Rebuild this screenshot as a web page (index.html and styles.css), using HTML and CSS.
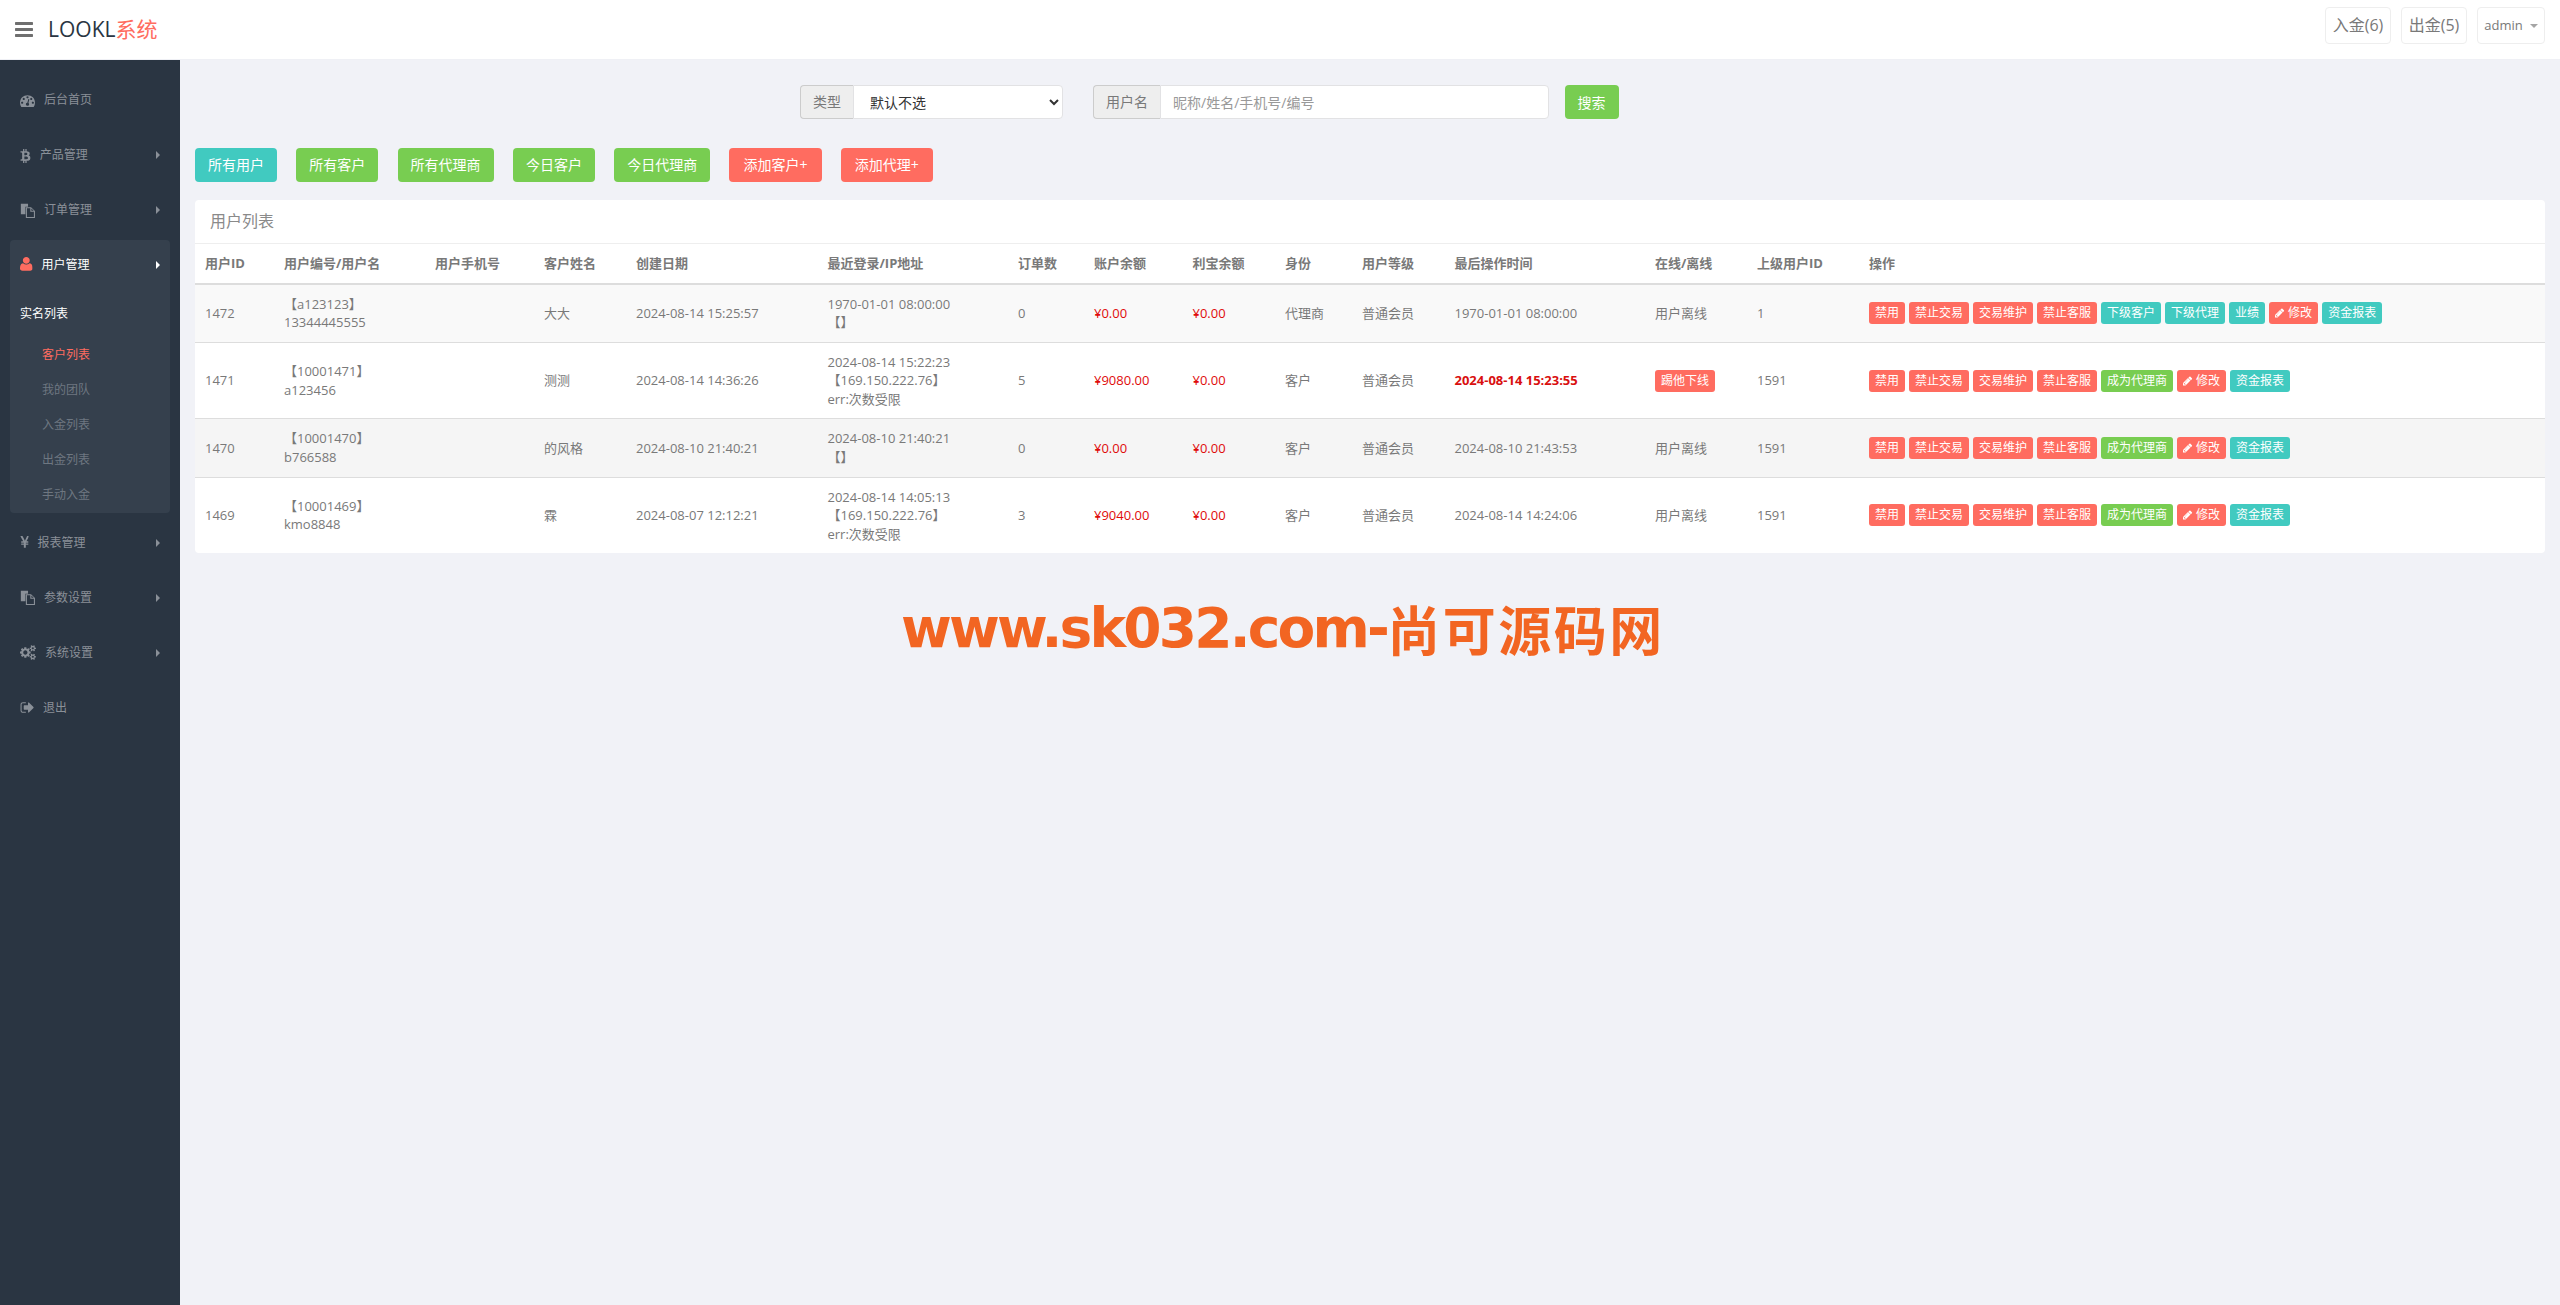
FILE: index.html
```html
<!DOCTYPE html>
<html lang="zh-CN">
<head>
<meta charset="utf-8">
<title>LOOKL系统</title>
<link rel="stylesheet" href="styles.css">
</head>
<body>
<svg class="sprite" xmlns="http://www.w3.org/2000/svg">
  <symbol id="i-bars" viewBox="128 256 1536 1280"><path d="M1664 1344v128q0 26-19 45t-45 19h-1408q-26 0-45-19t-19-45v-128q0-26 19-45t45-19h1408q26 0 45 19t19 45zm0-512v128q0 26-19 45t-45 19h-1408q-26 0-45-19t-19-45v-128q0-26 19-45t45-19h1408q26 0 45 19t19 45zm0-512v128q0 26-19 45t-45 19h-1408q-26 0-45-19t-19-45v-128q0-26 19-45t45-19h1408q26 0 45 19t19 45z"/></symbol>
  <symbol id="i-dash" viewBox="0 0 1792 1792"><path d="M384 1152q0-53-37.5-90.5t-90.5-37.5-90.5 37.5-37.5 90.5 37.5 90.5 90.5 37.5 90.5-37.5 37.5-90.5zm192-448q0-53-37.5-90.5t-90.5-37.5-90.5 37.5-37.5 90.5 37.5 90.5 90.5 37.5 90.5-37.5 37.5-90.5zm428 481l101-382q6-26-7.5-48.5t-38.5-29.5-48 6.5-30 39.5l-101 382q-60 5-107 43.5t-63 98.5q-20 77 20 146t117 89 146-20 89-117q16-60-6-117t-72-91zm660-33q0-53-37.5-90.5t-90.5-37.5-90.5 37.5-37.5 90.5 37.5 90.5 90.5 37.5 90.5-37.5 37.5-90.5zm-640-640q0-53-37.5-90.5t-90.5-37.5-90.5 37.5-37.5 90.5 37.5 90.5 90.5 37.5 90.5-37.5 37.5-90.5zm448 192q0-53-37.5-90.5t-90.5-37.5-90.5 37.5-37.5 90.5 37.5 90.5 90.5 37.5 90.5-37.5 37.5-90.5zm320 448q0 261-141 483-19 29-54 29h-1402q-35 0-54-29-141-221-141-483 0-182 71-348t191-286 286-191 348-71 348 71 286 191 191 286 71 348z"/></symbol>
  <symbol id="i-btc" viewBox="0 0 1280 1792"><path d="M1167 640q18 182-131 258 117 28 175 103t45 214q-7 71-32.5 125t-64.5 89-97 58.5-121.5 34.5-145.5 15v255h-154v-251q-80 0-122-1v252h-154v-255q-18 0-54-.5t-55-.5h-200l31-183h111q50 0 58-51v-402h16q-6-1-16-1v-287q-13-68-89-68h-111v-164l212 1q64 0 97-1v-252h154v247q82-2 122-2v-245h154v252q79 7 140 22.5t113 45 82.5 78 36.5 114.5zm-215 545q0-36-15-64t-37-46-57.5-30.5-65.5-18.5-74-9-69-3-64.5 1-47.5 1v338q8 0 37 .5t48 .5 53-1.5 58.5-4 57-8.5 55.5-14 47.5-21 39.5-30 24.5-40 9.5-51zm-71-476q0-33-12.5-58.5t-30.5-42-48-28-55-16.5-61.5-8-58-2.5-54 1-39.5.5v307q5 0 34.5.5t46.5 0 50-2 55-5.5 51.5-11 48.5-18.5 37-27 27-38.5 9-51z"/></symbol>
  <symbol id="i-files" viewBox="0 0 1792 1792"><path fill-rule="evenodd" d="M100 100h860v340H640v900H100zM700 500h620l470 470v820H700zM830 630v1030h830V1060h-430V630zM1360 650v280h280z"/></symbol>
  <symbol id="i-user" viewBox="0 0 1408 1792"><path d="M1408 1277q0 120-73 189.5t-194 69.5h-874q-121 0-194-69.5t-73-189.5q0-53 3.5-103.5t14-109 26.5-108.5 43-97.5 62-81 85.5-53.5 111.5-20q9 0 42 21.5t74.5 48 108 48 133.5 21.5 133.5-21.5 108-48 74.5-48 42-21.5q61 0 111.5 20t85.5 53.5 62 81 43 97.5 26.5 108.5 14 109 3.5 103.5zm-320-893q0 159-112.5 271.5t-271.5 112.5-271.5-112.5-112.5-271.5 112.5-271.5 271.5-112.5 271.5 112.5 112.5 271.5z"/></symbol>
  <symbol id="i-yen" viewBox="0 0 1025 1792"><path d="M662 1536h-172q-13 0-22.5-9t-9.5-23v-330h-288q-13 0-22.5-9t-9.5-23v-103q0-13 9.5-22.5t22.5-9.5h288v-85h-288q-13 0-22.5-9t-9.5-23v-104q0-13 9.5-22.5t22.5-9.5h214l-321-578q-8-16 0-32 10-16 28-16h194q19 0 29 18l215 425q19 38 56 125 10-24 30.5-68t27.5-61l191-420q8-19 29-19h191q17 0 27 16 9 14 1 31l-313 579h215q13 0 22.5 9.5t9.5 22.5v104q0 14-9.5 23t-22.5 9h-290v85h290q13 0 22.5 9.5t9.5 22.5v103q0 14-9.5 23t-22.5 9h-290v330q0 13-9.5 22.5t-22.5 9.5z"/></symbol>
  <symbol id="i-cogs" viewBox="0 0 1920 1792"><path d="M896 896q0-106-75-181t-181-75-181 75-75 181 75 181 181 75 181-75 75-181zm768 512q0-52-38-90t-90-38-90 38-38 90q0 53 37.5 90.5t90.5 37.5 90.5-37.5 37.5-90.5zm0-1024q0-52-38-90t-90-38-90 38-38 90q0 53 37.5 90.5t90.5 37.5 90.5-37.5 37.5-90.5zm-384 421v185q0 10-7 19.5t-16 10.5l-155 24q-11 35-32 76 34 48 90 115 7 11 7 20 0 12-7 19-23 30-82.5 89.5t-78.5 59.5q-11 0-21-7l-115-90q-37 19-77 31-11 108-23 155-7 24-30 24h-186q-11 0-20-7.5t-10-17.5l-23-153q-34-10-75-31l-118 89q-7 7-20 7-11 0-21-8-144-133-144-160 0-9 7-19 10-14 41-53t47-61q-23-44-35-82l-152-24q-10-1-17-9.5t-7-19.5v-185q0-10 7-19.5t16-10.5l155-24q11-35 32-76-34-48-90-115-7-11-7-20 0-12 7-20 22-30 82-89t79-59q11 0 21 7l115 90q34-18 77-32 11-108 23-154 7-24 30-24h186q11 0 20 7.5t10 17.5l23 153q34 10 75 31l118-89q8-7 20-7 11 0 21 8 144 133 144 160 0 8-7 19-12 16-42 54t-45 60q23 48 34 82l152 23q10 2 17 10.5t7 19.5zm640 533v140q0 16-149 31-12 27-30 52 51 113 51 138 0 4-4 7-122 71-124 71-8 0-46-47t-52-68q-20 2-30 2t-30-2q-14 21-52 68t-46 47q-2 0-124-71-4-3-4-7 0-25 51-138-18-25-30-52-149-15-149-31v-140q0-16 149-31 13-29 30-52-51-113-51-138 0-4 4-7 4-2 35-20t59-34 30-16q8 0 46 46.5t52 67.5q20-2 30-2t30 2q51-71 92-112l6-2q4 0 124 70 4 3 4 7 0 25-51 138 17 23 30 52 149 15 149 31zm0-1024v140q0 16-149 31-12 27-30 52 51 113 51 138 0 4-4 7-122 71-124 71-8 0-46-47t-52-68q-20 2-30 2t-30-2q-14 21-52 68t-46 47q-2 0-124-71-4-3-4-7 0-25 51-138-18-25-30-52-149-15-149-31v-140q0-16 149-31 13-29 30-52-51-113-51-138 0-4 4-7 4-2 35-20t59-34 30-16q8 0 46 46.5t52 67.5q20-2 30-2t30 2q51-71 92-112l6-2q4 0 124 70 4 3 4 7 0 25-51 138 17 23 30 52 149 15 149 31z"/></symbol>
  <symbol id="i-out" viewBox="0 0 1664 1792"><path d="M704 1440q0 4 1 20t.5 26.5-3 23.5-10 19.5-20.5 6.5h-320q-119 0-203.5-84.5t-84.5-203.5v-704q0-119 84.5-203.5t203.5-84.5h320q13 0 22.5 9.5t9.5 22.5q0 4 1 20t.5 26.5-3 23.5-10 19.5-20.5 6.5h-320q-66 0-113 47t-47 113v704q0 66 47 113t113 47h312l11.5 1 11.5 3 8 5.5 7 9 2 13.5zm928-544q0 26-19 45l-544 544q-19 19-45 19t-45-19-19-45v-288h-448q-26 0-45-19t-19-45v-384q0-26 19-45t45-19h448v-288q0-26 19-45t45-19 45 19l544 544q19 19 19 45z"/></symbol>
  <symbol id="i-pen" viewBox="128 128 1664 1536"><path d="M491 1536l91-91-235-235-91 91v107h128v128h107zm523-928q0-22-22-22-10 0-17 7l-542 542q-7 7-7 17 0 22 22 22 10 0 17-7l542-542q7-7 7-17zm-54-192l416 416-832 832h-416v-416zm683 96q0 53-37 90l-166 166-416-416 166-165q36-38 90-38 53 0 91 38l235 234q37 39 37 91z"/></symbol>
</svg>

<header class="topbar">
  <svg class="bars"><use href="#i-bars"/></svg>
  <div class="brand">LOOKL<span class="brand-accent">系统</span></div>
  <div class="top-actions">
    <a class="top-btn">入金(6)</a>
    <a class="top-btn">出金(5)</a>
    <a class="top-btn top-user">admin<span class="caret"></span></a>
  </div>
</header>

<div class="layout">
  <aside class="sidebar">
    <ul class="menu">
      <li class="item"><svg class="ico w15"><use href="#i-dash"/></svg>后台首页</li>
      <li class="item arrow"><svg class="ico w11"><use href="#i-btc"/></svg>产品管理</li>
      <li class="item arrow"><svg class="ico w15"><use href="#i-files"/></svg>订单管理</li>
      <li class="item arrow active"><svg class="ico w13 red"><use href="#i-user"/></svg>用户管理</li>
      <li class="sub">
        <div class="sub-title">实名列表</div>
        <ul class="sub-list">
          <li class="sub-item current">客户列表</li>
          <li class="sub-item">我的团队</li>
          <li class="sub-item">入金列表</li>
          <li class="sub-item">出金列表</li>
          <li class="sub-item">手动入金</li>
        </ul>
      </li>
      <li class="item arrow"><svg class="ico w9"><use href="#i-yen"/></svg>报表管理</li>
      <li class="item arrow"><svg class="ico w15"><use href="#i-files"/></svg>参数设置</li>
      <li class="item arrow"><svg class="ico w16"><use href="#i-cogs"/></svg>系统设置</li>
      <li class="item"><svg class="ico w14"><use href="#i-out"/></svg>退出</li>
    </ul>
  </aside>

  <main class="main">
    <form class="filter">
      <div class="group group-type">
        <span class="addon addon-type">类型</span>
        <select class="field"><option>默认不选</option></select>
      </div>
      <div class="group group-name">
        <span class="addon addon-name">用户名</span>
        <input class="field" type="text" placeholder="昵称/姓名/手机号/编号">
      </div>
      <button class="search" type="button">搜索</button>
    </form>

    <div class="quick">
      <a class="btn teal">所有用户</a>
      <a class="btn green">所有客户</a>
      <a class="btn green">所有代理商</a>
      <a class="btn green">今日客户</a>
      <a class="btn green">今日代理商</a>
      <a class="btn coral">添加客户+</a>
      <a class="btn coral">添加代理+</a>
    </div>

    <section class="panel">
      <h2 class="panel-title">用户列表</h2>
      <table class="users">
        <colgroup>
          <col><col><col><col><col><col><col><col><col><col><col><col><col><col><col>
        </colgroup>
        <thead>
          <tr>
            <th>用户ID</th><th>用户编号/用户名</th><th>用户手机号</th><th>客户姓名</th><th>创建日期</th><th>最近登录/IP地址</th><th>订单数</th><th>账户余额</th><th>利宝余额</th><th>身份</th><th>用户等级</th><th>最后操作时间</th><th>在线/离线</th><th>上级用户ID</th><th>操作</th>
          </tr>
        </thead>
        <tbody>
          <tr class="odd">
            <td>1472</td><td>【a123123】<br>13344445555</td><td></td><td>大大</td><td>2024-08-14 15:25:57</td><td>1970-01-01 08:00:00<br>【】</td><td>0</td><td class="money">¥0.00</td><td class="money">¥0.00</td><td>代理商</td><td>普通会员</td><td>1970-01-01 08:00:00</td><td>用户离线</td><td>1</td>
            <td><div class="ops"><a class="tag coral">禁用</a><a class="tag coral">禁止交易</a><a class="tag coral">交易维护</a><a class="tag coral">禁止客服</a><a class="tag teal">下级客户</a><a class="tag teal">下级代理</a><a class="tag teal">业绩</a><a class="tag coral"><svg class="pen"><use href="#i-pen"/></svg>修改</a><a class="tag teal">资金报表</a></div></td>
          </tr>
          <tr>
            <td>1471</td><td>【10001471】<br>a123456</td><td></td><td>测测</td><td>2024-08-14 14:36:26</td><td>2024-08-14 15:22:23<br>【169.150.222.76】<br>err:次数受限</td><td>5</td><td class="money">¥9080.00</td><td class="money">¥0.00</td><td>客户</td><td>普通会员</td><td class="recent">2024-08-14 15:23:55</td><td><a class="tag coral">踢他下线</a></td><td>1591</td>
            <td><div class="ops"><a class="tag coral">禁用</a><a class="tag coral">禁止交易</a><a class="tag coral">交易维护</a><a class="tag coral">禁止客服</a><a class="tag green">成为代理商</a><a class="tag coral"><svg class="pen"><use href="#i-pen"/></svg>修改</a><a class="tag teal">资金报表</a></div></td>
          </tr>
          <tr class="even">
            <td>1470</td><td>【10001470】<br>b766588</td><td></td><td>的风格</td><td>2024-08-10 21:40:21</td><td>2024-08-10 21:40:21<br>【】</td><td>0</td><td class="money">¥0.00</td><td class="money">¥0.00</td><td>客户</td><td>普通会员</td><td>2024-08-10 21:43:53</td><td>用户离线</td><td>1591</td>
            <td><div class="ops"><a class="tag coral">禁用</a><a class="tag coral">禁止交易</a><a class="tag coral">交易维护</a><a class="tag coral">禁止客服</a><a class="tag green">成为代理商</a><a class="tag coral"><svg class="pen"><use href="#i-pen"/></svg>修改</a><a class="tag teal">资金报表</a></div></td>
          </tr>
          <tr>
            <td>1469</td><td>【10001469】<br>kmo8848</td><td></td><td>霖</td><td>2024-08-07 12:12:21</td><td>2024-08-14 14:05:13<br>【169.150.222.76】<br>err:次数受限</td><td>3</td><td class="money">¥9040.00</td><td class="money">¥0.00</td><td>客户</td><td>普通会员</td><td>2024-08-14 14:24:06</td><td>用户离线</td><td>1591</td>
            <td><div class="ops"><a class="tag coral">禁用</a><a class="tag coral">禁止交易</a><a class="tag coral">交易维护</a><a class="tag coral">禁止客服</a><a class="tag green">成为代理商</a><a class="tag coral"><svg class="pen"><use href="#i-pen"/></svg>修改</a><a class="tag teal">资金报表</a></div></td>
          </tr>
        </tbody>
      </table>
    </section>

    <div class="watermark"><span class="wm-latin">www.sk032.com-</span><span class="wm-cjk">尚可源码网</span></div>
  </main>
</div>
</body>
</html>
```

FILE: styles.css
```css
* { box-sizing: border-box; }
html, body { margin: 0; height: 100%; }
body {
  display: flex;
  flex-direction: column;
  overflow: hidden;
  background: #f1f2f7;
  color: #797979;
  font-family: "Open Sans", "Noto Sans CJK SC", sans-serif;
  font-size: 13px;
  line-height: 1.42857;
}
ul { list-style: none; margin: 0; padding: 0; }
.sprite { display: none; }

/* top bar */
.topbar {
  flex: 0 0 60px;
  display: flex;
  align-items: center;
  padding: 0 15px;
  background: #fff;
  border-bottom: 1px solid #eff0f5;
}
.bars { width: 18px; height: 15px; fill: #6f6f6f; }
.brand {
  margin-left: 15px;
  font-size: 21px;
  color: #2a3542;
}
.brand-accent { color: #ff6c60; }
.top-actions { margin-left: auto; align-self: flex-start; margin-top: 7px; display: flex; gap: 10px; }
.top-btn {
  height: 37px;
  width: 66px;
  display: flex;
  align-items: center;
  justify-content: center;
  border: 1px solid #eeeeee;
  border-radius: 4px;
  font-size: 16px;
  color: #797979;
}
.top-user { width: 68px; font-size: 13px; }
.caret {
  margin-left: 7px;
  border-top: 4px solid #a5a5a5;
  border-left: 4px solid transparent;
  border-right: 4px solid transparent;
}

/* layout */
.layout { flex: 1; display: flex; min-height: 0; }
.sidebar {
  flex: 0 0 180px;
  padding: 15px 10px 0;
  background: #2a3542;
  font-size: 12px;
  color: #8a9098;
}
.item {
  position: relative;
  height: 50px;
  margin-bottom: 5px;
  padding-left: 10px;
  display: flex;
  align-items: center;
  gap: 9px;
  border-radius: 4px;
}
.item.active { margin-bottom: 0; background: #35404d; border-radius: 4px 4px 0 0; color: #fff; }
.arrow::after {
  content: "";
  position: absolute;
  left: 146px;
  top: 21px;
  border-left: 4px solid currentColor;
  border-top: 4px solid transparent;
  border-bottom: 4px solid transparent;
}
.ico { height: 15px; fill: #8a9098; flex: none; }
.w15 { width: 15px; }
.w11 { width: 10.7px; }
.w13 { width: 12.6px; height: 16px; }
.w9 { width: 8.6px; }
.w16 { width: 16px; }
.w14 { width: 13.9px; }
.ico.red { fill: #ff6c60; }
.sub {
  margin-bottom: 5px;
  background: #35404d;
  border-radius: 0 0 4px 4px;
}
.sub-title { height: 47.5px; padding-left: 10px; display: flex; align-items: center; color: #fff; }
.sub-item { height: 35px; padding-left: 32px; display: flex; align-items: center; color: #6e7781; }
.sub-item.current { color: #ff6c60; }

/* main */
.main { position: relative; flex: 1; min-width: 0; padding: 25px 15px 0; }
.filter { display: flex; align-items: stretch; height: 34px; margin-left: 605px; font-size: 14px; }
.group { display: flex; height: 34px; }
.group-type { width: 263px; margin-right: 30px; }
.group-name { width: 456px; margin-right: 15.5px; }
.addon {
  display: flex;
  flex: none;
  align-items: center;
  justify-content: center;
  background: #eeeeee;
  border: 1px solid #cccccc;
  border-right: 0;
  border-radius: 4px 0 0 4px;
  color: #797979;
  font-size: 14px;
}
.addon-type { width: 53px; }
.addon-name { width: 67px; }
.field {
  flex: 1;
  min-width: 0;
  height: 34px;
  padding: 0 12px;
  background: #fff;
  border: 1px solid #e2e2e4;
  border-radius: 0 4px 4px 0;
  font-family: inherit;
  font-size: 14px;
  color: #333;
}
select.field { padding-left: 12px; }
.field::placeholder { color: #999; }
.search {
  width: 54px;
  height: 34px;
  padding: 0;
  border: 0;
  border-radius: 4px;
  background: #78cd51;
  color: #fff;
  font-family: inherit;
  font-size: 14px;
}

.quick { display: flex; gap: 19.3px; margin-top: 29px; }
.btn {
  height: 34px;
  padding: 0 13px;
  display: flex;
  align-items: center;
  border-radius: 4px;
  font-size: 14px;
  color: #fff;
}
.btn.coral { padding: 0 14px; }
.teal { background: #41cac0; }
.green { background: #78cd51; }
.coral { background: #ff6c60; }

.panel {
  margin-top: 18px;
  background: #fff;
  border-radius: 4px;
  overflow: hidden;
}
.panel-title {
  margin: 0;
  padding: 10px 15px;
  height: 44px;
  border-bottom: 1px solid #eeeeee;
  font-size: 16px;
  font-weight: 400;
  line-height: 23px;
  color: #8a8a8a;
}

.users { width: 100%; table-layout: fixed; border-collapse: collapse; }
.users col:nth-child(1) { width: 79px; }
.users col:nth-child(2) { width: 151px; }
.users col:nth-child(3) { width: 109px; }
.users col:nth-child(4) { width: 92px; }
.users col:nth-child(5) { width: 191.5px; }
.users col:nth-child(6) { width: 190.5px; }
.users col:nth-child(7) { width: 76px; }
.users col:nth-child(8) { width: 98.5px; }
.users col:nth-child(9) { width: 92.5px; }
.users col:nth-child(10) { width: 77px; }
.users col:nth-child(11) { width: 92.5px; }
.users col:nth-child(12) { width: 200.5px; }
.users col:nth-child(13) { width: 102px; }
.users col:nth-child(14) { width: 112px; }
.users th, .users td { padding: 10px; text-align: left; vertical-align: middle; overflow: hidden; white-space: nowrap; }
.users th { border-bottom: 2px solid #dddddd; font-weight: 700; color: #797979; }
.users td { border-top: 1px solid #dddddd; }
.users tbody tr:first-child td { border-top: 0; }
.odd td { background: #f9f9f9; }
.even td { background: #f5f5f5; }
.money { color: #e00b0b; }
.recent { color: #d90f0f; font-weight: 700; }
.ops { display: flex; gap: 4px; }
.tag {
  display: inline-flex;
  align-items: center;
  height: 22px;
  padding: 0 6px;
  border-radius: 3px;
  font-size: 12px;
  line-height: 22px;
  color: #fff;
}
.pen { width: 10px; height: 10px; margin-right: 3px; fill: #fff; }

.watermark {
  position: absolute;
  left: 721px;
  top: 536px;
  display: flex;
  align-items: center;
  color: #f26522;
  font-weight: 700;
  line-height: 64px;
  white-space: nowrap;
}
.wm-latin { font-family: "DejaVu Sans", sans-serif; font-size: 55px; letter-spacing: -2.8px; }
.wm-cjk { font-family: "Noto Sans CJK SC", sans-serif; font-size: 53px; letter-spacing: 2.5px; }
```
